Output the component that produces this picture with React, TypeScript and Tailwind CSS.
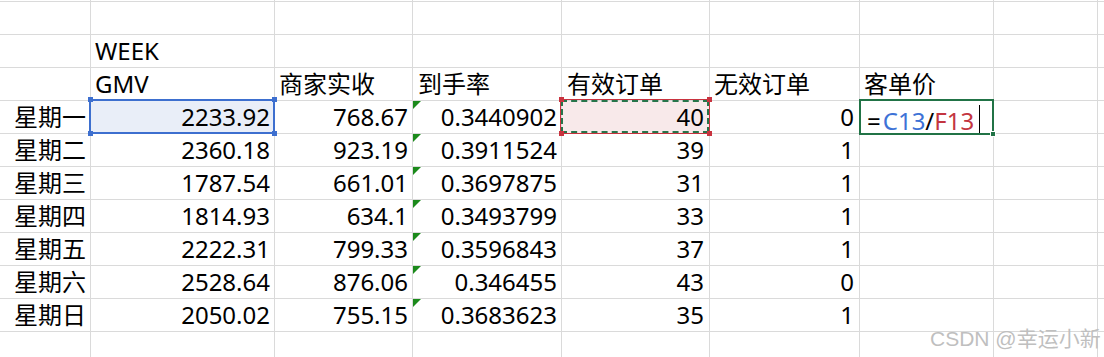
import React from 'react';
import clsx from 'clsx';

// Sheet rows: label, GMV, 商家实收, 到手率, 有效订单, 无效订单
const days: string[][] = [
  ['星期一', '2233.92', '768.67', '0.3440902', '40', '0'],
  ['星期二', '2360.18', '923.19', '0.3911524', '39', '1'],
  ['星期三', '1787.54', '661.01', '0.3697875', '31', '1'],
  ['星期四', '1814.93', '634.1', '0.3493799', '33', '1'],
  ['星期五', '2222.31', '799.33', '0.3596843', '37', '1'],
  ['星期六', '2528.64', '876.06', '0.346455', '43', '0'],
  ['星期日', '2050.02', '755.15', '0.3683623', '35', '1'],
];

const COLS = 9;

function Cell({
  children,
  right,
  className,
}: {
  children?: React.ReactNode;
  right?: boolean;
  className?: string;
}) {
  return (
    <div
      className={clsx(
        'relative h-[33px] border-r border-b border-[#dadada] px-[4px] leading-[32px] whitespace-nowrap',
        right ? 'text-right' : 'text-left',
        className
      )}
    >
      {children}
    </div>
  );
}

function Handle({ className, color }: { className: string; color: string }) {
  return <span className={clsx('absolute z-20 h-[5px] w-[5px]', color, className)} />;
}

// small green "number stored as text" marker
function TextFlag() {
  return (
    <svg className="absolute left-0 top-0" width="8" height="8" viewBox="0 0 8 8">
      <polygon points="0,0 8,0 0,8" fill="#1b8a1b" />
    </svg>
  );
}

function EmptyRow({ h = 'h-[33px]' }: { h?: string }) {
  return (
    <>
      {Array.from({ length: COLS }).map((_, i) => (
        <div key={i} className={clsx(h, 'border-r border-b border-[#dadada]')} />
      ))}
    </>
  );
}

export default function App() {
  return (
    <div className="relative h-[357px] w-[1104px] overflow-hidden bg-white text-[24px] text-black font-['Noto_Sans','Noto_Sans_CJK_SC',sans-serif]">
      <div className="grid grid-cols-[91px_184px_138px_149px_148px_150px_134px_104px_1fr]">
        <EmptyRow h="h-[2px]" />
        <EmptyRow />

        {/* row: WEEK */}
        <Cell />
        <Cell>WEEK</Cell>
        {Array.from({ length: COLS - 2 }).map((_, i) => (
          <Cell key={i} />
        ))}

        {/* header row */}
        <Cell />
        <Cell>GMV</Cell>
        <Cell>商家实收</Cell>
        <Cell className="pl-[5px]">到手率</Cell>
        <Cell className="pl-[5px]">有效订单</Cell>
        <Cell>无效订单</Cell>
        <Cell>客单价</Cell>
        <Cell />
        <Cell />

        {days.map((d, r) => (
          <React.Fragment key={d[0]}>
            <Cell right>{d[0]}</Cell>
            <Cell right className={r === 0 ? 'bg-[#e9eef8]' : ''}>
              {d[1]}
              {r === 0 && (
                <>
                  <span className="absolute -left-[2px] -top-[2px] -right-px -bottom-px z-10 border-2 border-[#3d6fcf]" />
                  <Handle color="bg-[#3d6fcf]" className="-left-[3px] -top-[4px]" />
                  <Handle color="bg-[#3d6fcf]" className="-right-[3px] -top-[4px]" />
                  <Handle color="bg-[#3d6fcf]" className="-left-[3px] -bottom-[3px]" />
                  <Handle color="bg-[#3d6fcf]" className="-right-[3px] -bottom-[3px]" />
                </>
              )}
            </Cell>
            <Cell right>{d[2]}</Cell>
            <Cell right>
              <TextFlag />
              {d[3]}
            </Cell>
            <Cell right className={clsx('pr-[5px]', r === 0 && 'bg-[#f8e9ea]')}>
              {d[4]}
              {r === 0 && (
                <>
                  <span className="absolute -left-[2px] -top-[2px] -right-px -bottom-px z-10 border border-[#c9333f]">
                    <span className="absolute inset-0 border-2 border-dashed border-[#27744a]" />
                  </span>
                  <Handle color="bg-[#c9333f]" className="-left-[3px] -top-[4px]" />
                  <Handle color="bg-[#c9333f]" className="-right-[3px] -top-[4px]" />
                  <Handle color="bg-[#c9333f]" className="-left-[3px] -bottom-[3px]" />
                  <Handle color="bg-[#c9333f]" className="-right-[3px] -bottom-[3px]" />
                </>
              )}
            </Cell>
            <Cell right className="pr-[5px]">{d[5]}</Cell>
            {r === 0 ? (
              <Cell className="pl-[7px]">
                <span className="mr-[2px]">=</span>
                <span className="text-[#3d72d6]">C13</span>
                <span>/</span>
                <span className="text-[#c3353f]">F13</span>
                <span className="ml-[5px] inline-block h-[29px] w-px translate-y-[4px] bg-black align-baseline" />
                <span className="absolute -left-px -top-[2px] -right-px -bottom-[2px] z-10 border-2 border-[#217346]" />
                <span className="absolute -right-[3px] -bottom-[4px] z-20 h-[6px] w-[6px] border border-white bg-[#217346]" />
              </Cell>
            ) : (
              <Cell />
            )}
            <Cell />
            <Cell />
          </React.Fragment>
        ))}

        <EmptyRow />
      </div>

      <div className="absolute left-[930px] top-[328px] whitespace-nowrap text-[21px] leading-none text-[#bfbfbf] font-['Liberation_Sans','Noto_Sans_CJK_SC',sans-serif]">
        CSDN @幸运小新
      </div>
    </div>
  );
}
